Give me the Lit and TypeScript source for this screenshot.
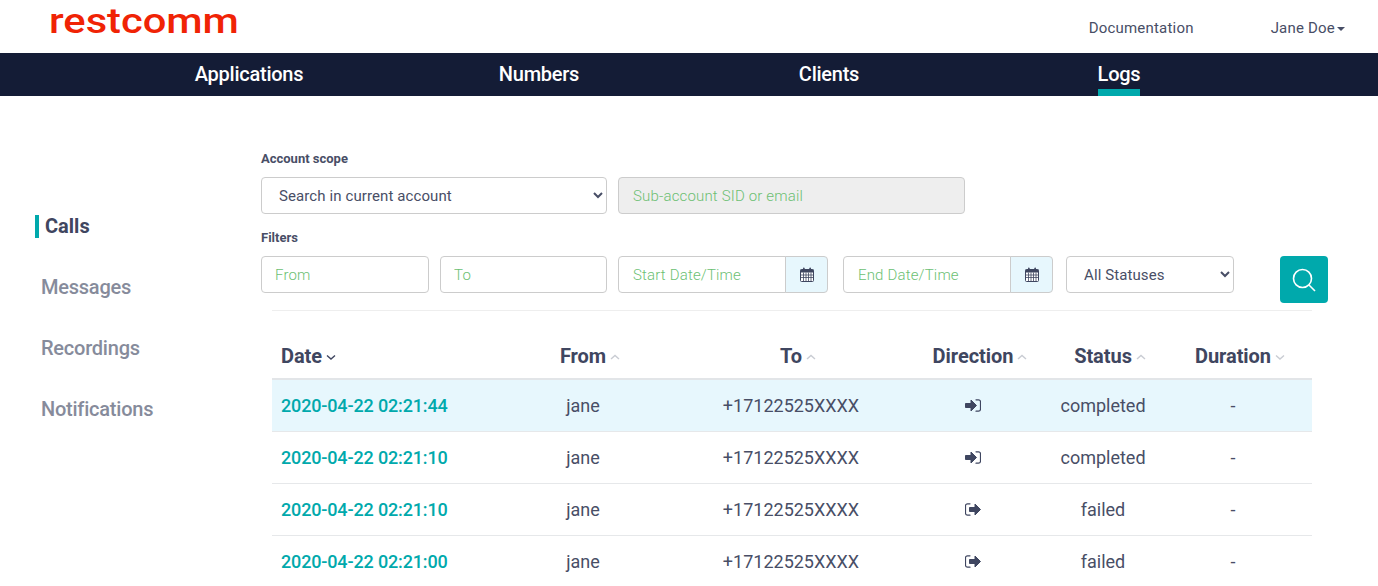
import { LitElement, html, css, svg } from 'lit';
import { customElement } from 'lit/decorators.js';
import { classMap } from 'lit/directives/class-map.js';

interface CallRow {
  date: string;
  from: string;
  to: string;
  dir: 'in' | 'out';
  status: string;
  duration: string;
}

const ROWS: CallRow[] = [
  { date: '2020-04-22 02:21:44', from: 'jane', to: '+17122525XXXX', dir: 'in', status: 'completed', duration: '-' },
  { date: '2020-04-22 02:21:10', from: 'jane', to: '+17122525XXXX', dir: 'in', status: 'completed', duration: '-' },
  { date: '2020-04-22 02:21:10', from: 'jane', to: '+17122525XXXX', dir: 'out', status: 'failed', duration: '-' },
  { date: '2020-04-22 02:21:00', from: 'jane', to: '+17122525XXXX', dir: 'out', status: 'failed', duration: '-' },
];

const NAV = ['Applications', 'Numbers', 'Clients', 'Logs'];
const SIDE = ['Calls', 'Messages', 'Recordings', 'Notifications'];
const COLS: { label: string; dir: 'up' | 'down'; on?: boolean }[] = [
  { label: 'Date', dir: 'down', on: true },
  { label: 'From', dir: 'up' },
  { label: 'To', dir: 'up' },
  { label: 'Direction', dir: 'up' },
  { label: 'Status', dir: 'up' },
  { label: 'Duration', dir: 'down' },
];

const calendar = html`<svg width="14" height="15" viewBox="0 0 14 15">
  <path d="M1.5 2.5h11a1 1 0 0 1 1 1v10a1 1 0 0 1-1 1h-11a1 1 0 0 1-1-1v-10a1 1 0 0 1 1-1z" fill="#fff" stroke="#3f4660" />
  <rect x="0.5" y="2.5" width="13" height="3" fill="#3f4660" />
  <rect x="3" y="0.5" width="1.6" height="3.5" rx="0.8" fill="#3f4660" />
  <rect x="9.4" y="0.5" width="1.6" height="3.5" rx="0.8" fill="#3f4660" />
  <path d="M1 8h12M1 10.5h12M3.5 5.5v9M6 5.5v9M8.5 5.5v9M11 5.5v9" stroke="#3f4660" stroke-width="0.8" fill="none" />
</svg>`;

const dirIn = svg`<path d="M0.5 4.5h5.5V1l5.5 5.5L6 12V8.5H0.5z" fill="#3f4660" stroke="#3f4660" stroke-linejoin="round" />
  <path d="M11 0.8h2.5a2 2 0 0 1 2 2v7.4a2 2 0 0 1-2 2H11" fill="none" stroke="#3f4660" stroke-width="1.2" stroke-linecap="round" />`;
const dirOut = svg`<path d="M4.5 4.5H10V1l5.5 5.5L10 12V8.5H4.5z" fill="#3f4660" stroke="#3f4660" stroke-linejoin="round" />
  <path d="M5 0.8H2.5a2 2 0 0 0-2 2v7.4a2 2 0 0 0 2 2H5" fill="none" stroke="#3f4660" stroke-width="1.2" stroke-linecap="round" />`;

@customElement('app-root')
export class AppRoot extends LitElement {
  static styles = css`
    :host {
      display: block;
      height: 100vh;
      overflow: hidden;
      background: #fff;
      color: #484e66;
      font-family: Roboto, 'Liberation Sans', sans-serif;
    }
    * {
      box-sizing: border-box;
    }
    .top {
      display: flex;
      align-items: center;
      justify-content: space-between;
      height: 53px;
      padding: 0 33px 0 49px;
    }
    .logo {
      display: inline-block;
      align-self: flex-start;
      margin-top: 1px;
      font-size: 35px;
      line-height: 41px;
      font-weight: 500;
      color: #f02305;
      transform: scaleX(1.19);
      transform-origin: left center;
    }
    .top-links {
      display: flex;
      align-items: center;
      gap: 77px;
      margin-top: 2px;
      font-size: 15px;
      letter-spacing: 0.2px;
      color: #484e66;
    }
    .user {
      display: flex;
      align-items: center;
      gap: 2px;
    }
    .user i {
      width: 0;
      height: 0;
      margin-top: 2px;
      border: 4.5px solid transparent;
      border-top-color: #484e66;
      border-bottom: 0;
    }
    nav {
      display: grid;
      grid-template-columns: repeat(4, 290px);
      height: 43px;
      padding-left: 104px;
      background: #141c36;
    }
    nav div {
      display: flex;
      justify-content: center;
    }
    nav span {
      height: 43px;
      padding-top: 8px;
      font-size: 20px;
      line-height: 26px;
      font-weight: 500;
      letter-spacing: -0.25px;
      color: #fff;
    }
    nav span.active {
      border-bottom: 7px solid #00a9ac;
    }
    .page {
      display: flex;
    }
    aside {
      width: 261px;
      padding: 119px 0 0 35px;
      display: flex;
      flex-direction: column;
      gap: 38px;
    }
    aside div {
      height: 23px;
      padding-left: 2px;
      border-left: 4px solid transparent;
      font-size: 20px;
      line-height: 23px;
      font-weight: 500;
      letter-spacing: -0.23px;
      color: #868b9b;
    }
    aside div.active {
      padding-left: 6px;
      border-left-color: #00a9ac;
      font-weight: 700;
      letter-spacing: 0;
      color: #3f4660;
    }
    main {
      width: 1067px;
      padding-top: 55px;
    }
    .label {
      height: 15px;
      margin-bottom: 11px;
      font-size: 13px;
      line-height: 15px;
      font-weight: 700;
      color: #484e66;
    }
    .form-row {
      display: flex;
      align-items: flex-start;
      margin-bottom: 16px;
    }
    .scope select {
      width: 346px;
      margin-right: 11px;
    }
    select {
      height: 37px;
      padding: 0 12px 0 13px;
      background: #fff;
      border: 1px solid #ccc;
      border-radius: 4px;
      font: 400 15px Roboto, sans-serif;
      letter-spacing: 0.1px;
      color: #484e66;
    }
    input {
      height: 37px;
      padding: 0 14px;
      background: #fff;
      border: 1px solid #ccc;
      border-radius: 4px;
      font: 300 15px Roboto, sans-serif;
      letter-spacing: 0.17px;
      color: #484e66;
      outline: none;
    }
    input::placeholder {
      color: #6cbf73;
      opacity: 1;
    }
    input:disabled {
      background: #eee;
    }
    .sub {
      width: 347px;
    }
    .phone {
      width: 168px;
      margin-right: 11px;
      padding-left: 13px;
    }
    .phone + .phone {
      width: 167px;
    }
    .date {
      display: flex;
      width: 210px;
      height: 37px;
      margin-right: 15px;
    }
    .date input {
      flex: 1;
      min-width: 0;
      border-radius: 4px 0 0 4px;
    }
    .addon {
      display: flex;
      align-items: center;
      justify-content: center;
      width: 43px;
      margin-left: -1px;
      background: #e7f7fd;
      border: 1px solid #ccc;
      border-radius: 0 4px 4px 0;
    }
    .status {
      width: 168px;
      margin: 0 46px 0 -2px;
    }
    .go {
      display: flex;
      align-items: center;
      justify-content: center;
      width: 48px;
      height: 47px;
      padding: 0;
      background: #00a9ac;
      border: 0;
      border-radius: 4px;
    }
    .table {
      width: 1040px;
      margin: -9px 0 0 11px;
      border-top: 1px solid #eee;
    }
    .tr {
      display: grid;
      grid-template-columns: 206px 210px 206px 158px 102px 158px;
      align-items: center;
      height: 52px;
      border-bottom: 1px solid #e6e8ea;
      font-size: 18px;
      text-align: center;
    }
    .tr > div:first-child {
      padding-left: 9px;
      text-align: left;
    }
    .tr.head {
      height: 69px;
      padding-top: 22px;
      border-bottom: 2px solid #e2e5e8;
      font-size: 20px;
      font-weight: 700;
      letter-spacing: -0.05px;
      color: #3f4660;
    }
    .tr.selected {
      background: #e7f7fd;
    }
    .th {
      position: relative;
      display: inline-block;
    }
    .th svg {
      position: absolute;
      left: 100%;
      top: 50%;
      margin: -2px 0 0 4px;
      stroke: #c9ccd3;
    }
    .th.on svg {
      stroke: #3f4660;
    }
    .when {
      font-weight: 500;
      letter-spacing: -0.15px;
      color: #00a9ac;
    }
    .dir svg {
      display: block;
      margin: 0 auto;
    }
  `;

  private _caret(dir: 'up' | 'down') {
    const d = dir === 'up' ? 'M1 5l4-3.5L9 5' : 'M1 1.5L5 5l4-3.5';
    return html`<svg width="10" height="6" viewBox="0 0 10 6" fill="none" stroke-width="1.4"><path d=${d} /></svg>`;
  }

  private _date(placeholder: string) {
    return html`<div class="date"><input placeholder=${placeholder} /><div class="addon">${calendar}</div></div>`;
  }

  render() {
    return html`
      <header class="top">
        <span class="logo">restcomm</span>
        <div class="top-links">
          <span>Documentation</span>
          <span class="user">Jane Doe<i></i></span>
        </div>
      </header>
      <nav>
        ${NAV.map((n) => html`<div><span class=${classMap({ active: n === 'Logs' })}>${n}</span></div>`)}
      </nav>
      <div class="page">
        <aside>
          ${SIDE.map((s) => html`<div class=${classMap({ active: s === 'Calls' })}>${s}</div>`)}
        </aside>
        <main>
          <div class="label">Account scope</div>
          <div class="form-row scope">
            <select><option>Search in current account</option></select>
            <input class="sub" placeholder="Sub-account SID or email" disabled />
          </div>
          <div class="label">Filters</div>
          <div class="form-row">
            <input class="phone" placeholder="From" />
            <input class="phone" placeholder="To" />
            ${this._date('Start Date/Time')} ${this._date('End Date/Time')}
            <select class="status"><option>All Statuses</option></select>
            <button class="go" aria-label="Search">
              <svg width="26" height="26" viewBox="0 0 26 26" fill="none" stroke="#fff" stroke-width="1.6">
                <circle cx="11.5" cy="11.5" r="9" />
                <path d="M18 18l6 6" />
              </svg>
            </button>
          </div>
          <div class="table">
            <div class="tr head">
              ${COLS.map(
                (c) => html`<div>
                  <span class=${classMap({ th: true, on: !!c.on })}>${c.label}${this._caret(c.dir)}</span>
                </div>`
              )}
            </div>
            ${ROWS.map(
              (r, i) => html`<div class=${classMap({ tr: true, selected: i === 0 })}>
                <div class="when">${r.date}</div>
                <div>${r.from}</div>
                <div>${r.to}</div>
                <div class="dir">
                  <svg width="16" height="13" viewBox="0 0 16 13">${r.dir === 'in' ? dirIn : dirOut}</svg>
                </div>
                <div>${r.status}</div>
                <div>${r.duration}</div>
              </div>`
            )}
          </div>
        </main>
      </div>
    `;
  }
}
